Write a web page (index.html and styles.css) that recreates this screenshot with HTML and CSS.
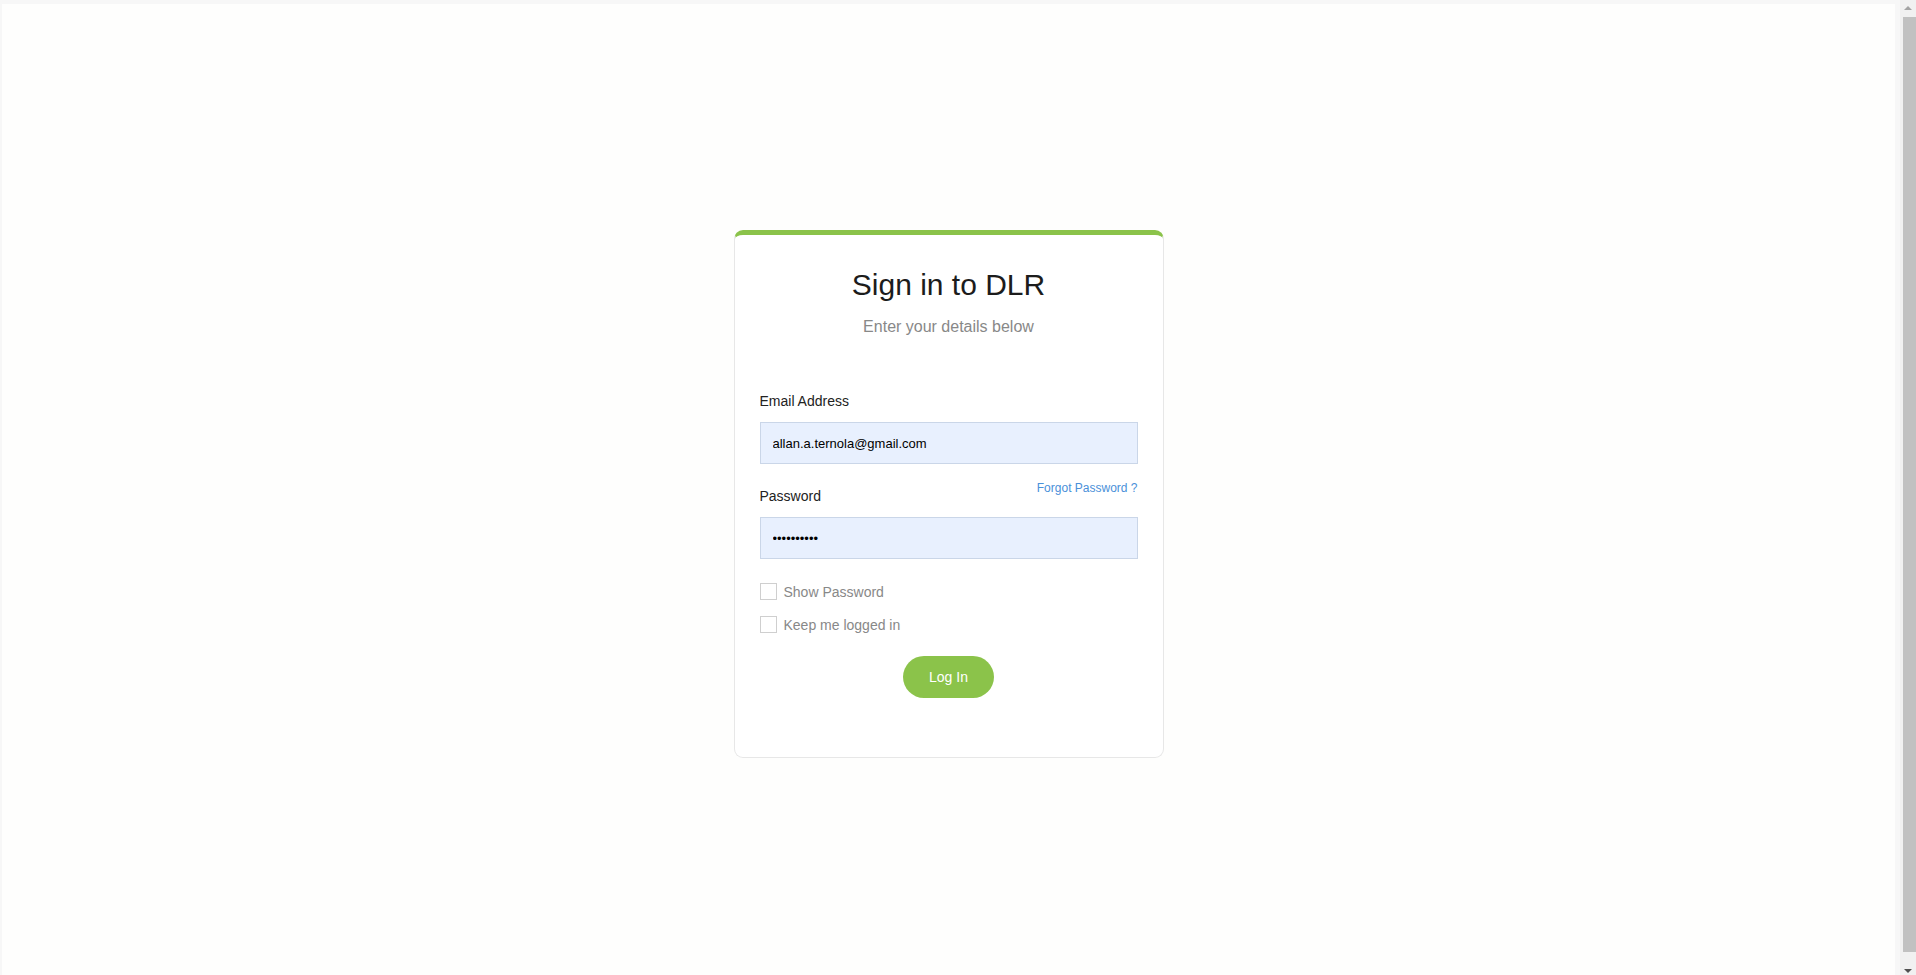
FILE: index.html
```html
<!DOCTYPE html>
<html lang="en">
<head>
<meta charset="utf-8">
<title>Sign in to DLR</title>
<link rel="stylesheet" href="styles.css">
</head>
<body>
<div class="window">
  <main class="page">
    <form class="card" onsubmit="return false;">
      <h1 class="title">Sign in to DLR</h1>
      <p class="subtitle">Enter your details below</p>

      <div class="field field-email">
        <div class="label-row">
          <label class="label" for="email">Email Address</label>
        </div>
        <input class="input" id="email" type="text" value="allan.a.ternola@gmail.com">
      </div>

      <div class="field field-password">
        <div class="label-row">
          <label class="label" for="password">Password</label>
          <a class="forgot" href="#">Forgot Password ?</a>
        </div>
        <input class="input" id="password" type="password" value="abcdefghij">
      </div>

      <div class="checks">
        <label class="check"><input class="box" type="checkbox"><span class="check-text">Show Password</span></label>
        <label class="check"><input class="box" type="checkbox"><span class="check-text">Keep me logged in</span></label>
      </div>

      <div class="actions">
        <button class="btn" type="submit">Log In</button>
      </div>
    </form>
  </main>
  <div class="scrollbar">
    <div class="arrow arrow-up"></div>
    <div class="thumb"></div>
    <div class="arrow arrow-down"></div>
  </div>
</div>
</body>
</html>
```

FILE: styles.css
```css
* { box-sizing: border-box; }

html, body {
  margin: 0;
  padding: 0;
  height: 100%;
  overflow: hidden;
}

body {
  font-family: "Liberation Sans", Arial, sans-serif;
  background: #f7f7f7;
}

.window {
  display: flex;
  height: 975px;
}

.page {
  flex: 1;
  margin: 4px 5px 0 2px;
  background: #fefefd;
  display: flex;
  flex-direction: column;
  align-items: center;
}

.card {
  width: 430px;
  margin-top: 226px;
  background: #fff;
  border: 1px solid #e7e7e7;
  border-top: 5px solid #8bc34a;
  border-radius: 9px;
  padding: 32px 25px 59px;
  display: flex;
  flex-direction: column;
}

.title {
  margin: 0;
  font-size: 30px;
  line-height: 36px;
  font-weight: 400;
  color: #1c1c1c;
  text-align: center;
}

.subtitle {
  margin: 14px 0 0;
  font-size: 16px;
  line-height: 20px;
  color: #888;
  text-align: center;
}

.field { display: flex; flex-direction: column; }
.field-email { margin-top: 54px; }
.field-password { margin-top: 13px; }

.label-row {
  display: flex;
  justify-content: space-between;
  align-items: flex-end;
}

.label {
  font-size: 14px;
  line-height: 20px;
  color: #222;
}

.field-password .label-row { height: 29px; }

.forgot {
  font-size: 12px;
  line-height: 20px;
  color: #4a90d9;
  text-decoration: none;
  margin-bottom: 8px;
}

.input {
  margin-top: 11px;
  height: 42px;
  width: 100%;
  padding: 0 12px;
  background: #e8f0fe;
  border: 1px solid #cad6e8;
  border-radius: 0;
  font-family: "Liberation Sans", Arial, sans-serif;
  font-size: 13px;
  color: #000;
  outline: none;
}

.field-password .input { margin-top: 11px; }

.checks {
  margin-top: 23px;
  display: flex;
  flex-direction: column;
  gap: 13px;
}

.check {
  display: flex;
  align-items: flex-start;
  height: 20px;
}

.box {
  appearance: none;
  -webkit-appearance: none;
  margin: 1px 0 0;
  width: 17px;
  height: 17px;
  border: 1px solid #cfcfcf;
  background: #fff;
  border-radius: 0;
}

.check-text {
  margin-left: 7px;
  font-size: 14px;
  line-height: 20px;
  color: #888;
}

.actions {
  margin-top: 21px;
  display: flex;
  justify-content: center;
}

.btn {
  width: 91px;
  height: 42px;
  border: none;
  border-radius: 21px;
  background: #8bc34a;
  color: #fff;
  font-family: "Liberation Sans", Arial, sans-serif;
  font-size: 14px;
  cursor: pointer;
}

.scrollbar {
  width: 16px;
  background: #f1f1f1;
  display: flex;
  flex-direction: column;
  align-items: center;
}

.arrow {
  width: 0;
  height: 0;
  border-left: 4px solid transparent;
  border-right: 4px solid transparent;
}

.arrow-up {
  margin-top: 6px;
  border-bottom: 4px solid #a3a3a3;
}

.arrow-down {
  margin-top: 17px;
  border-top: 4px solid #505050;
}

.thumb {
  margin-top: 7px;
  width: 13px;
  height: 935px;
  background: #c1c1c1;
  margin-left: 2px;
}
```
